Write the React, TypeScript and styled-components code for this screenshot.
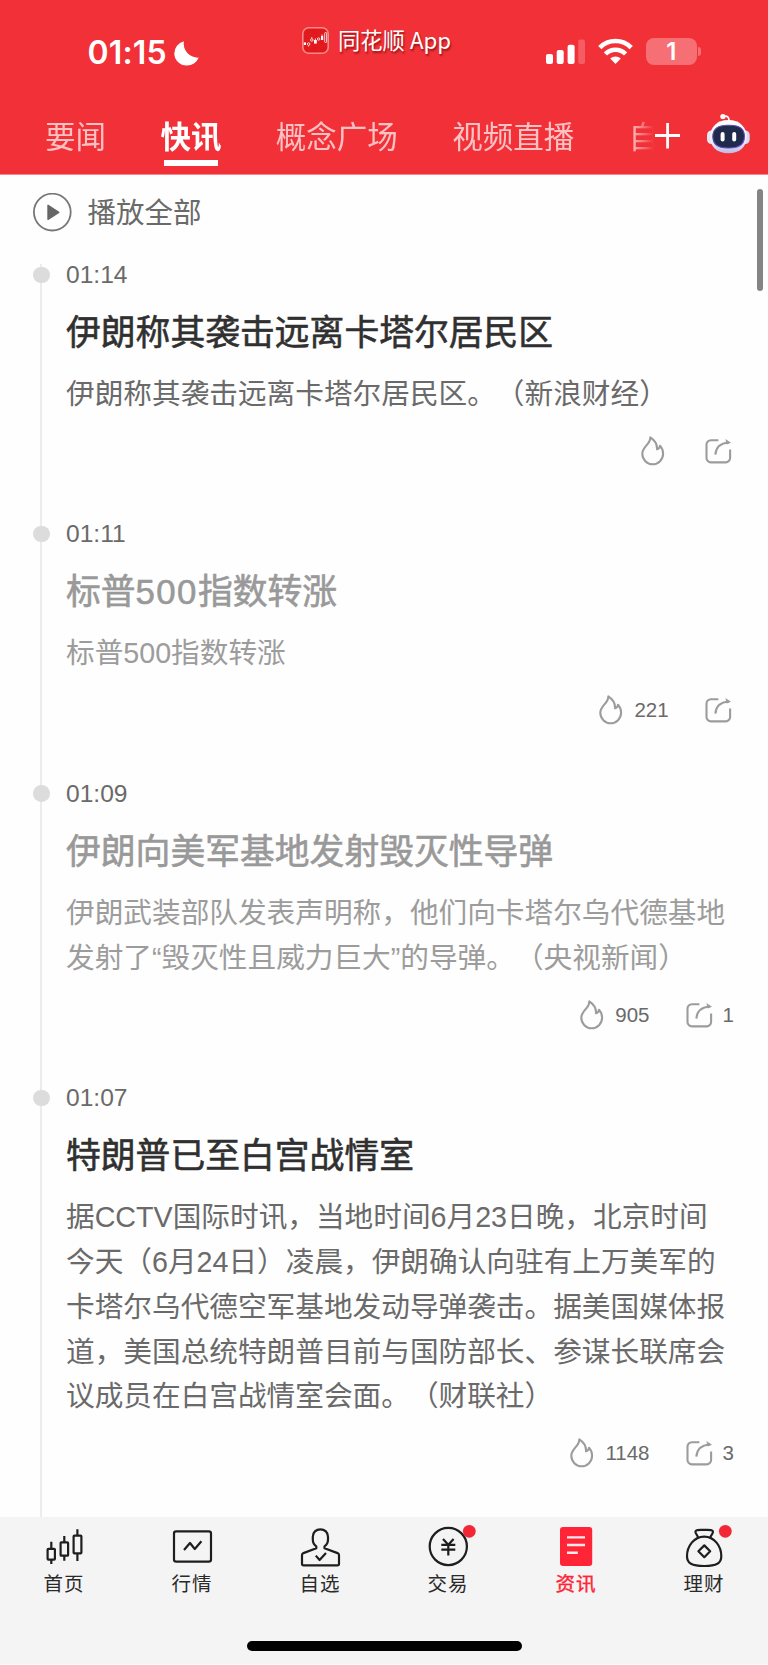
import React from "react";
import styled, { createGlobalStyle, css } from "styled-components";

const GlobalStyle = createGlobalStyle`
  *, *::before, *::after { box-sizing: border-box; }
  html, body { margin: 0; padding: 0; background: #fff; }
  body {
    font-family: "Liberation Sans", "Noto Sans CJK SC", sans-serif;
    text-spacing-trim: space-all;
  }
  svg { display: block; flex: none; }
`;

const RED = "#f23037";

const Screen = styled.div`
  width: 768px;
  height: 1665px;
  display: flex;
  flex-direction: column;
  overflow: hidden;
  background: #fefefe;
`;

/* ---------- header ---------- */

const Header = styled.header`
  flex: none;
  height: 175px;
  background: ${RED};
  border-bottom: 1px solid #f5898d;
  color: #fff;
  display: flex;
  flex-direction: column;
`;

const StatusBar = styled.div`
  height: 104px;
  display: grid;
  grid-template-columns: 302px 1fr auto;
  padding-right: 67px;
`;

const Clock = styled.div`
  display: flex;
  gap: 7px;
  padding: 33px 0 0 87.5px;
  font: 600 32px/40px Inter, sans-serif;
  letter-spacing: 0.15px;
  svg { margin-top: 8px; }
`;

const AppBadge = styled.div`
  display: flex;
  align-items: center;
  gap: 9px;
  height: 27px;
  margin-top: 27px;
  font: 400 22.3px/27px "Noto Sans CJK SC", sans-serif;
  text-shadow: 1px 2px 2px rgba(90, 0, 0, 0.6);
  white-space: nowrap;
`;

const AppName = styled.span`
  margin-top: -2px;
`;

const Indicators = styled.div`
  display: flex;
  align-items: center;
  gap: 13px;
  height: 27px;
  margin-top: 38px;
`;

const Battery = styled.div`
  display: flex;
  align-items: center;
  gap: 1.5px;
`;

const BatteryBody = styled.div`
  width: 50.5px;
  height: 27px;
  border-radius: 8px;
  background: #f66f74;
  font: 600 24px/27px Inter, sans-serif;
  text-align: center;
`;

const BatteryTip = styled.div`
  width: 3px;
  height: 9px;
  border-radius: 0 4px 4px 0;
  background: #f66f74;
`;

const TabBar = styled.nav`
  display: flex;
  height: 70px;
  padding-left: 45px;
`;

const TabList = styled.div`
  display: flex;
  gap: 54.4px;
  width: 620px;
  margin-right: -10px;
  mask-image: linear-gradient(90deg, #000 586px, transparent 609px);
`;

const Tab = styled.div<{ $active?: boolean }>`
  flex: none;
  display: flex;
  flex-direction: column;
  align-items: center;
  font-size: 30.5px;
  line-height: 48px;
  padding-top: 9px;
  color: rgba(255, 255, 255, 0.7);
  ${(p) =>
    p.$active &&
    css`
      color: #fff;
      font-weight: 700;
      &::after {
        content: "";
        width: 54px;
        height: 6px;
        margin-top: -1px;
        background: #fff;
      }
    `}
`;

const TabTools = styled.div`
  display: flex;
  align-items: flex-start;
  gap: 24px;
  svg:first-child { margin-top: 19px; }
  svg:last-child { margin-top: 8px; }
`;

/* ---------- feed ---------- */

const Feed = styled.main`
  position: relative;
  flex: 1;
  min-height: 0;
  overflow: hidden;
  padding: 18px 34px 0 33px;
`;

const ScrollThumb = styled.div`
  position: absolute;
  top: 14px;
  right: 5px;
  width: 6px;
  height: 102px;
  border-radius: 3px;
  background: #848484;
`;

const PlayAll = styled.div`
  display: flex;
  align-items: center;
  gap: 15.5px;
  height: 39px;
  margin-bottom: 32px;
  font-size: 28.5px;
  line-height: 39px;
  color: #6a6a6a;
`;

const PlayLabel = styled.span`
  padding-top: 1px;
`;

const Item = styled.article`
  display: flex;
  gap: 16.5px;
`;

const Rail = styled.div`
  position: relative;
  flex: none;
  width: 16.5px;
  display: flex;
  justify-content: center;
  &::before {
    content: "";
    width: 2px;
    background: #ececec;
  }
  &::after {
    content: "";
    position: absolute;
    top: 2.5px;
    left: 0;
    width: 16.5px;
    height: 16.5px;
    border-radius: 50%;
    background: #dcdcdc;
  }
`;

const Content = styled.div`
  flex: 1;
  min-width: 0;
  padding-bottom: 57.5px;
`;

const Time = styled.time`
  display: block;
  font-size: 24.6px;
  line-height: 22px;
  color: #6a6a6a;
`;

const Title = styled.h2<{ $read?: boolean }>`
  margin: 23px 0 0;
  font-size: 34.8px;
  font-weight: 400;
  line-height: 48px;
  color: ${(p) => (p.$read ? "#999" : "#303030")};
  -webkit-text-stroke: 0.6px currentColor;
  white-space: nowrap;
`;

const Digits = styled.span`
  letter-spacing: 1.4px;
`;

const Body = styled.p<{ $read?: boolean }>`
  margin: 14.9px 0 0;
  font-size: 28.67px;
  line-height: 44.8px;
  color: ${(p) => (p.$read ? "#9c9c9c" : "#6a6a6a")};
  white-space: nowrap;
`;

const Line = styled.span`
  display: block;
`;

const Actions = styled.div`
  display: flex;
  justify-content: flex-end;
  gap: 35.4px;
  margin-top: 19.3px;
`;

const Action = styled.div`
  display: flex;
  align-items: center;
  gap: 7.7px;
  height: 30px;
  font-size: 20.5px;
  line-height: 30px;
  color: #6a6a6a;
`;

/* ---------- bottom navigation ---------- */

const BottomNav = styled.footer`
  flex: none;
  height: 148px;
  display: flex;
  flex-direction: column;
  align-items: center;
  background: #f4f4f4;
  border-bottom: 1px solid #fdfdfd;
`;

const NavRow = styled.div`
  width: 100%;
  display: grid;
  grid-template-columns: repeat(6, 1fr);
  padding-top: 6px;
  height: 124px;
`;

const NavItem = styled.div<{ $active?: boolean }>`
  display: flex;
  flex-direction: column;
  align-items: center;
  font-size: 19.5px;
  letter-spacing: 0.9px;
  line-height: 26px;
  color: ${(p) => (p.$active ? "#ff2436" : "#2a2a2a")};
  -webkit-text-stroke: ${(p) => (p.$active ? "0.4px" : "0")} currentColor;
`;

const HomeIndicator = styled.div`
  width: 275px;
  height: 9.5px;
  border-radius: 5px;
  background: #000;
`;

/* ---------- icons ---------- */

const Moon = () => (
  <svg width="25" height="25" viewBox="0 0 25 25">
    <path d="M9.8 0.2A14.2 14.2 0 0 0 24.8 16.6A12.6 12.6 0 0 1 12.6 24.5A12.3 12.3 0 0 1 0.3 12.4A12.6 12.6 0 0 1 9.8 0.2Z" fill="#fff" />
  </svg>
);

const AppLogo = () => (
  <svg width="27" height="27" viewBox="0 0 27 27">
    <rect x="0.8" y="0.8" width="25.4" height="25.4" rx="6" fill="#e3181c" stroke="#f58a8c" strokeWidth="1.6" />
    <path d="M2 8h23M2 13h23M2 19h23M8 2v23M17 2v23" stroke="#d4282b" strokeWidth="0.5" />
    <g fill="#fff">
      <rect x="1.8" y="15.4" width="2.2" height="2.6" />
      <rect x="12" y="13" width="2.8" height="3.6" />
      <rect x="19" y="9" width="2.2" height="4" />
    </g>
    <g fill="none" stroke="#fff" strokeWidth="0.8">
      <circle cx="6.6" cy="17" r="1.3" />
      <path d="M9.8 10v1.5M6.6 18.5v1M13.4 11.5v1.5M20.1 7.5v2" />
      <circle cx="9.8" cy="13" r="1.3" />
      <circle cx="16.6" cy="12" r="1.2" />
      <rect x="22.7" y="5.5" width="1.9" height="10" rx="0.8" />
    </g>
  </svg>
);

const Signal = () => (
  <svg width="39" height="27" viewBox="0 0 39 27">
    <g fill="#fff">
      <rect x="0" y="16" width="7" height="10" rx="2" />
      <rect x="10.7" y="12" width="7" height="14" rx="2" />
      <rect x="21.6" y="6.7" width="7" height="19.3" rx="2" />
      <rect x="32.3" y="1.5" width="6.7" height="24.5" rx="2" opacity="0.22" />
    </g>
  </svg>
);

const Wifi = () => (
  <svg width="35" height="27" viewBox="0 0 35 27">
    <g fill="none" stroke="#fff" strokeWidth="4.6">
      <path d="M1.8 9.6A22 22 0 0 1 33.2 9.6" />
      <path d="M7.4 16A14.2 14.2 0 0 1 27.6 16" />
    </g>
    <path d="M12.2 20.6A7.5 7.5 0 0 1 22.8 20.6L17.5 26Z" fill="#fff" />
  </svg>
);

const Plus = () => (
  <svg width="25" height="26" viewBox="0 0 25 26">
    <path d="M12.6 0V25.4M0 12.5H25" stroke="#fff" strokeWidth="2.8" />
  </svg>
);

const Robot = () => (
  <svg width="48" height="44" viewBox="0 0 48 44">
    <defs>
      <linearGradient id="shell" x1="0" y1="0" x2="0" y2="1">
        <stop offset="0" stopColor="#fff" />
        <stop offset="0.65" stopColor="#eceefb" />
        <stop offset="1" stopColor="#bdb9e6" />
      </linearGradient>
      <linearGradient id="rim" x1="0" y1="0" x2="1" y2="1">
        <stop offset="0" stopColor="#56619a" />
        <stop offset="0.6" stopColor="#5b43b5" />
        <stop offset="1" stopColor="#8d5be8" />
      </linearGradient>
    </defs>
    <path d="M19.5 4.6C23 3.2 25.4 5.4 25 9" fill="none" stroke="#fff" strokeWidth="1.8" />
    <circle cx="18.9" cy="4.5" r="2.6" fill="#fff" />
    <rect x="3" y="18.5" width="9" height="13.5" rx="4.5" fill="#e4e7f8" />
    <rect x="36.7" y="18.5" width="9" height="13.5" rx="4.5" fill="#d7dcf6" />
    <path d="M24.4 8C36 8 42.7 15.5 42.7 25S36 41.3 24.4 41.3 6 34.5 6 25 12.8 8 24.4 8Z" fill="url(#shell)" />
    <path d="M24.6 13.3H26C36 13.3 40.5 17 40.5 24.6S36 36 26 36H23.4C13.4 36 8.8 32.2 8.8 24.6S13.4 13.3 23.4 13.3Z" fill="#1f2a4c" stroke="url(#rim)" strokeWidth="1.1" />
    <rect x="16.6" y="20" width="4" height="9.4" rx="2" fill="#fff" />
    <rect x="28.2" y="20" width="4" height="9.4" rx="2" fill="#fff" />
  </svg>
);

const PlayCircle = () => (
  <svg width="39" height="39" viewBox="0 0 39 39">
    <circle cx="19.3" cy="19.1" r="18.4" fill="none" stroke="#777" strokeWidth="1.8" />
    <path d="M15 12.3V26.3L25.8 19.3Z" fill="#666" stroke="#666" strokeWidth="1.4" strokeLinejoin="round" />
  </svg>
);

const Flame = () => (
  <svg width="30" height="30" viewBox="0 0 30 30">
    <path
      d="M11.3 1.4C11.6 8.2 3.3 10.6 3.3 17.8A10.4 10.4 0 0 0 24.1 17.8C24.1 14 22.7 11.6 21 9.8C20.7 11.6 19.8 12.8 18 13.2C18.4 7.6 15.6 4.2 11.3 1.4Z"
      fill="none"
      stroke="#9c9c9c"
      strokeWidth="2.1"
      strokeLinejoin="round"
    />
  </svg>
);

const Share = () => (
  <svg width="30" height="30" viewBox="0 0 30 30">
    <g fill="none" stroke="#9c9c9c" strokeWidth="2.1">
      <path d="M14.4 4.2H6.9A4.4 4.4 0 0 0 2.5 8.6V22A4.4 4.4 0 0 0 6.9 26.4H21.7A4.4 4.4 0 0 0 26.1 22V13.4" />
      <path d="M11.4 18.6C11.8 11.8 16.4 7.2 24.6 6.5" />
    </g>
    <path d="M21.4 3L27 6.8L22.8 8.4Z" fill="#9c9c9c" />
  </svg>
);

const NavSvg: React.FC<{ children: React.ReactNode; badge?: boolean }> = ({ children, badge }) => (
  <svg width="48" height="48" viewBox="0 0 48 48" overflow="visible">
    <g fill="none" stroke="#1e1e1e" strokeWidth="2.2" strokeLinejoin="round">
      {children}
    </g>
    {badge && <circle cx="45.3" cy="8.3" r="6.4" fill="#f22735" />}
  </svg>
);

const HomeIcon = () => (
  <NavSvg>
    <rect x="7.6" y="25.8" width="7.3" height="10.8" rx="0.8" />
    <rect x="20.6" y="19.3" width="7.5" height="13.4" rx="0.8" />
    <rect x="33.6" y="12.6" width="7.8" height="17.8" rx="0.8" />
    <path d="M11.3 18.7V25.5M11.3 37V41M24.3 13V19M24.3 33V37.7M37.4 6.3V12.5M37.4 30.5V38" />
  </NavSvg>
);

const MarketIcon = () => (
  <NavSvg>
    <rect x="6" y="8.3" width="37" height="30.4" rx="2.2" />
    <path d="M16 27L22 20L26.8 26L33.4 18.2" />
  </NavSvg>
);

const WatchIcon = () => (
  <NavSvg>
    <path d="M20.3 25.2V23.4C17.6 21.6 16.8 19.4 16.8 16.5V13.8C16.8 9.4 20 6.3 24.4 6.3S32 9.4 32 13.8V16.5C32 19.4 31.2 21.6 28.5 23.4V25.2L41.6 30.1C42.5 30.5 43 31 43 32V40.8C43 41.8 42.4 42.4 41.4 42.4H7.6C6.6 42.4 6 41.8 6 40.8V32C6 31 6.5 30.5 7.4 30.1Z" />
    <path d="M19.8 32.6L23.6 37L30 30" />
  </NavSvg>
);

const TradeIcon = () => (
  <NavSvg badge>
    <circle cx="24.3" cy="23.5" r="18.6" />
    <path d="M19 16L24.3 21.7L29.6 16M24.3 21.7V32.6M17.3 21.8H31.3M17.3 26.6H31.3" />
  </NavSvg>
);

const NewsIcon = () => (
  <NavSvg>
    <rect x="8" y="4" width="32.2" height="39" rx="3" fill="#ff2436" stroke="none" />
    <path d="M15 14.4H33M15 22H33M15 29.7H25.8" stroke="#ffe9eb" strokeWidth="2.4" />
  </NavSvg>
);

const WealthIcon = () => (
  <NavSvg badge>
    <path d="M18 14.4C17.6 12 15.4 11 15.4 8.8C15.4 6.4 19.6 6.9 24.2 6.9S33 6.4 33 8.8C33 11 30.8 12 30.4 14.4" />
    <path d="M24.2 13.6C34.4 13.6 41.3 23.2 41.3 33.2C41.3 40.4 36.6 43 24.2 43S7 40.4 7 33.2C7 23.2 14 13.6 24.2 13.6Z" />
    <path d="M24.3 22.4L30.2 28.3L24.3 34.2L18.4 28.3Z" />
  </NavSvg>
);

/* ---------- data ---------- */

interface News {
  time: string;
  title: string;
  body: string[];
  read?: boolean;
  likes?: number;
  shares?: number;
}

const tabs = ["要闻", "快讯", "概念广场", "视频直播", "自"];

const news: News[] = [
  {
    time: "01:14",
    title: "伊朗称其袭击远离卡塔尔居民区",
    body: ["伊朗称其袭击远离卡塔尔居民区。（新浪财经）"],
  },
  { time: "01:11", title: "标普500指数转涨", body: ["标普500指数转涨"], read: true, likes: 221 },
  {
    time: "01:09",
    title: "伊朗向美军基地发射毁灭性导弹",
    body: ["伊朗武装部队发表声明称，他们向卡塔尔乌代德基地", "发射了“毁灭性且威力巨大”的导弹。（央视新闻）"],
    read: true,
    likes: 905,
    shares: 1,
  },
  {
    time: "01:07",
    title: "特朗普已至白宫战情室",
    body: [
      "据CCTV国际时讯，当地时间6月23日晚，北京时间",
      "今天（6月24日）凌晨，伊朗确认向驻有上万美军的",
      "卡塔尔乌代德空军基地发动导弹袭击。据美国媒体报",
      "道，美国总统特朗普目前与国防部长、参谋长联席会",
      "议成员在白宫战情室会面。（财联社）",
    ],
    likes: 1148,
    shares: 3,
  },
];

const navItems = [
  { label: "首页", Icon: HomeIcon },
  { label: "行情", Icon: MarketIcon },
  { label: "自选", Icon: WatchIcon },
  { label: "交易", Icon: TradeIcon },
  { label: "资讯", Icon: NewsIcon, active: true },
  { label: "理财", Icon: WealthIcon },
];

const spaceDigits = (text: string) =>
  text.split(/(\d+)/).map((part, i) => (i % 2 ? <Digits key={i}>{part}</Digits> : part));

export default function App() {
  return (
    <>
      <GlobalStyle />
      <Screen>
        <Header>
          <StatusBar>
            <Clock>
              01:15
              <Moon />
            </Clock>
            <AppBadge>
              <AppLogo />
              <AppName>同花顺 App</AppName>
            </AppBadge>
            <Indicators>
              <Signal />
              <Wifi />
              <Battery>
                <BatteryBody>1</BatteryBody>
                <BatteryTip />
              </Battery>
            </Indicators>
          </StatusBar>
          <TabBar>
            <TabList>
              {tabs.map((t) => (
                <Tab key={t} $active={t === "快讯"}>
                  {t}
                </Tab>
              ))}
            </TabList>
            <TabTools>
              <Plus />
              <Robot />
            </TabTools>
          </TabBar>
        </Header>

        <Feed>
          <ScrollThumb />
          <PlayAll>
            <PlayCircle />
            <PlayLabel>播放全部</PlayLabel>
          </PlayAll>
          {news.map((n) => (
            <Item key={n.time}>
              <Rail />
              <Content>
                <Time>{n.time}</Time>
                <Title $read={n.read}>{spaceDigits(n.title)}</Title>
                <Body $read={n.read}>
                  {n.body.map((line) => (
                    <Line key={line}>{line}</Line>
                  ))}
                </Body>
                <Actions>
                  <Action>
                    <Flame />
                    {n.likes}
                  </Action>
                  <Action>
                    <Share />
                    {n.shares}
                  </Action>
                </Actions>
              </Content>
            </Item>
          ))}
        </Feed>

        <BottomNav>
          <NavRow>
            {navItems.map(({ label, Icon, active }) => (
              <NavItem key={label} $active={active}>
                <Icon />
                {label}
              </NavItem>
            ))}
          </NavRow>
          <HomeIndicator />
        </BottomNav>
      </Screen>
    </>
  );
}
